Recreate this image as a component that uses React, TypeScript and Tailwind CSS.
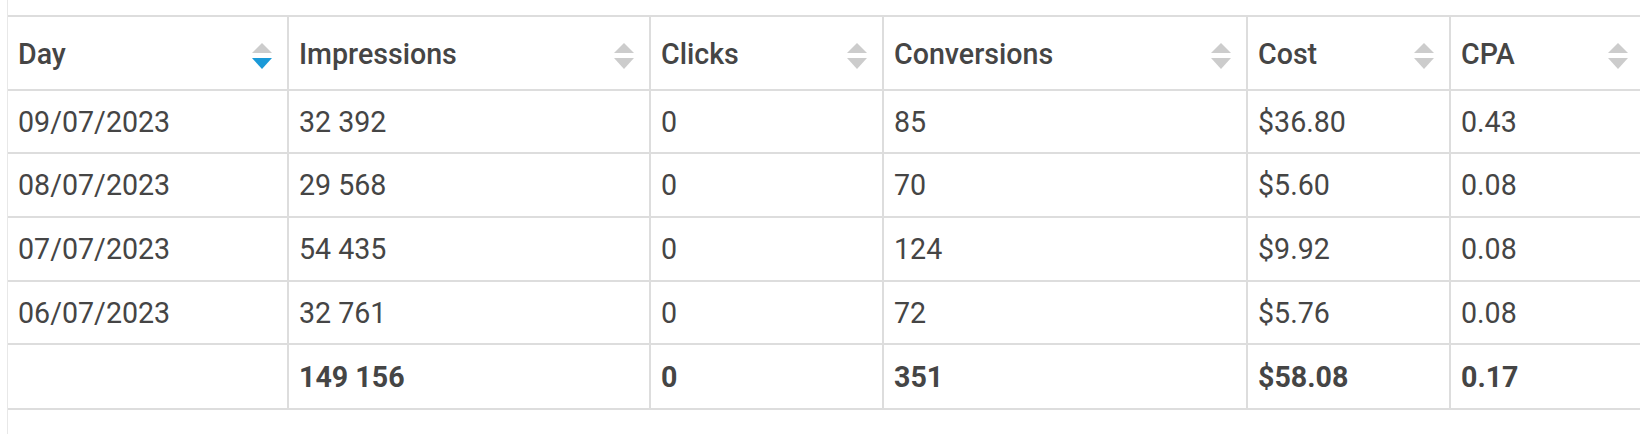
import React from "react";

type Row = { day: string; imp: string; clicks: string; conv: string; cost: string; cpa: string };

const rows: Row[] = [
  { day: "09/07/2023", imp: "32 392", clicks: "0", conv: "85", cost: "$36.80", cpa: "0.43" },
  { day: "08/07/2023", imp: "29 568", clicks: "0", conv: "70", cost: "$5.60", cpa: "0.08" },
  { day: "07/07/2023", imp: "54 435", clicks: "0", conv: "124", cost: "$9.92", cpa: "0.08" },
  { day: "06/07/2023", imp: "32 761", clicks: "0", conv: "72", cost: "$5.76", cpa: "0.08" },
];

const heights = ["h-[63px]", "h-[64px]", "h-[64px]", "h-[63px]"];

function SortIcon({ active }: { active?: boolean }) {
  return (
    <svg width="20" height="26" viewBox="0 0 20 26" className="mt-[5px] shrink-0">
      <polygon points="10,0 20,10 0,10" fill="#cccccc" />
      <polygon points="0,15 20,15 10,26" fill={active ? "#1b9ad8" : "#cccccc"} />
    </svg>
  );
}

const cell = "border-r-2 border-b-2 border-[#dddddd] pl-[10px] flex items-center";

export default function App() {
  const headers = ["Day", "Impressions", "Clicks", "Conversions", "Cost", "CPA"];
  return (
    <div
      className="w-[1640px] h-[434px] overflow-hidden bg-white text-[#454545]"
      style={{ fontFamily: "Roboto, 'Noto Sans', sans-serif" }}
    >
      <div className="ml-[7px] h-full border-l border-[#e8e8e8] pt-[15px] pl-0">
        <div className="grid grid-cols-[281px_362px_233px_364px_203px_194px] w-[1637px] border-t-2 border-[#dddddd] text-[28.6px] leading-[1.172]">
          {headers.map((h, i) => (
            <div key={h} className={`${cell} h-[74px] justify-between pr-[15px] font-medium`}>
              <span className="pt-[3px]">{h}</span>
              <SortIcon active={i === 0} />
            </div>
          ))}
          {rows.map((r, ri) => (
            <React.Fragment key={r.day}>
              {[r.day, r.imp, r.clicks, r.conv, r.cost, r.cpa].map((v, ci) => (
                <div key={ci} className={`${cell} ${heights[ri]}`}>
                  <span className="pt-[2px]">{v}</span>
                </div>
              ))}
            </React.Fragment>
          ))}
          {["", "149 156", "0", "351", "$58.08", "0.17"].map((v, ci) => (
            <div key={ci} className={`${cell} h-[65px] font-bold`}>
              <span className="pt-[2px]">{v}</span>
            </div>
          ))}
        </div>
      </div>
    </div>
  );
}
